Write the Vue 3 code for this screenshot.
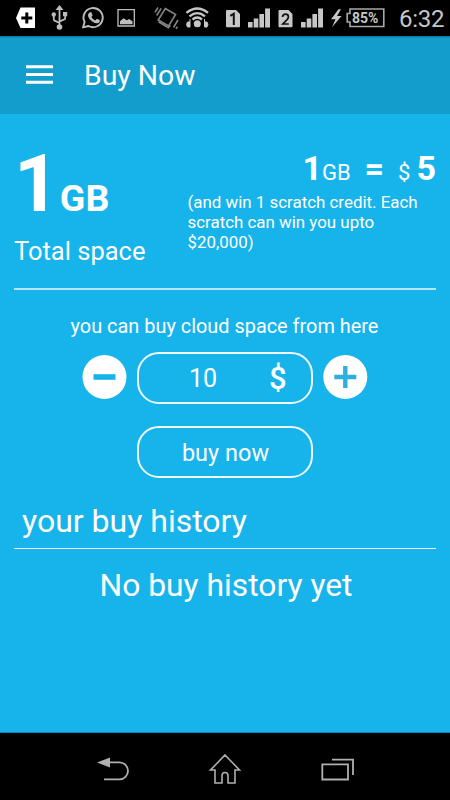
<script setup>
import { ref } from 'vue'

const amount = ref(10)
const decrease = () => { if (amount.value > 1) amount.value-- }
const increase = () => { amount.value++ }
</script>

<template>
  <div class="screen">
    <div class="status">
      <svg width="45" height="36" viewBox="0 0 45 36">
        <path d="M16 18 20.500 7.500H35V28H20.500Z" fill="#fff" />
        <path d="M26.800 12.500v11M21.300 18h11" stroke="#000" stroke-width="3" />
      </svg>
      <svg width="30" height="36" viewBox="45 0 30 36" fill="none" stroke="#bdbdbd" stroke-width="1.800">
        <path d="M59.500 9v18M53.800 15v4.200q0 1.300 1.400 1.700l4.300 2.100M65.200 14v4q0 1.300-1.400 1.700l-4.300 1.600" />
        <path d="M59.500 5 63.500 10H55.500Z" fill="#bdbdbd" stroke="none" />
        <circle cx="53.800" cy="14.500" r="2.200" fill="#bdbdbd" stroke="none" />
        <path d="M63 12h4.200v4.200h-4.200z" fill="#bdbdbd" stroke="none" />
        <circle cx="59.500" cy="27" r="2.800" fill="#bdbdbd" stroke="none" />
      </svg>
      <svg width="35" height="36" viewBox="75 0 35 36">
        <path d="M83 27.400 84.600 22A9.600 9.600 0 1 1 88.500 26Z" fill="none" stroke="#bdbdbd" stroke-width="1.900" stroke-linejoin="round" />
        <path d="M89.800 12.200h1.500l1.300 3-1.200 1.700q1.300 2.500 3.900 3.500l1.600-1.700 3 1.500q.1 2.500-2.600 3-2 .3-5.100-1.800-3.600-2.600-4.200-5.500-.2-2.400 1.800-3.700Z" fill="#bdbdbd" />
      </svg>
      <svg width="40" height="36" viewBox="110 0 40 36">
        <path d="M118 9.700h16.300v16.300H118Z" fill="none" stroke="#bdbdbd" stroke-width="1.300" />
        <path d="M120 24.200v-3l3.500-3 3.300 2 2.200-1.300 3.500 2.300v3Z" fill="#bdbdbd" />
      </svg>
      <svg width="34" height="36" viewBox="150 0 34 36" fill="none" stroke="#858585" stroke-width="1.600">
        <path d="M165.300 8.500 175.600 14.500 168.600 26 158.200 20Z" />
        <path d="M158.500 21.800l9.800 6 2-2.500M161.200 8.300l-4.500 7.200M158 7.500l-3 4.800M178 20l-4.500 7.500M177.500 26.800l-1.500 2" />
      </svg>
      <svg width="36" height="36" viewBox="184 0 36 36" fill="none" stroke="#c7c7c7" stroke-width="2.300">
        <path d="M186.500 12.800Q197.300 4.300 208 12.800M189.500 16.300Q197.300 10 205 16.300M192.500 19.500Q197.300 15.500 202 19.500" />
        <circle cx="197.300" cy="23.800" r="3.500" fill="#c7c7c7" stroke="none" />
        <path d="M190 19v8h-2.500l-1-2.500 1-2.500h2.500M204.500 19v8h2.500l1-2.500-1-2.500h-2.500" fill="#c7c7c7" stroke-width="1" />
      </svg>
      <svg width="53" height="36" viewBox="220 0 53 36" fill="#c7c7c7">
        <path d="M227 10h9l4 4v12.200q0 1-1 1h-12q-1 0-1-1V11q0-1 1-1Z" />
        <path d="M230.300 15.800 233.800 13.700V25" fill="none" stroke="#111" stroke-width="2" />
        <path d="M248 22h4.600v5.500H248ZM253.700 18.500h4.600v9h-4.600ZM259.400 14h4.600v13.500h-4.600ZM265.100 8.500h4.900v19h-4.900Z" />
      </svg>
      <svg width="55" height="36" viewBox="273 0 55 36" fill="#c7c7c7">
        <path d="M279.500 10h9l4 4v12.200q0 1-1 1h-12q-1 0-1-1V11q0-1 1-1Z" />
        <path d="M282.500 17q.3-2.800 3-2.800t2.900 2.500q0 1.600-1.500 3.200L282.800 24h6" fill="none" stroke="#111" stroke-width="1.700" />
        <path d="M301 22h4.600v5.500H301ZM306.700 18.500h4.600v9h-4.600ZM312.400 14h4.600v13.500h-4.600ZM318.100 8.500h4.900v19h-4.900Z" />
      </svg>
      <svg width="18" height="36" viewBox="328 0 18 36">
        <path d="M338.500 9.300 331 19.300h4.500L332 27.300 341.600 16h-4.600L341 9.300Z" fill="#c7c7c7" />
      </svg>
      <div class="battery">
        <svg width="40" height="20" viewBox="0 0 40 20" fill="none" stroke="#a8a8a8" stroke-width="1.600">
          <path d="M4 1H37.800V18.500H4V14H1.200V5.500H4Z" />
        </svg>
        <span>85%</span>
      </div>
      <span class="clock">6:32</span>
    </div>

    <header class="bar">
      <svg class="menu" width="27" height="20" viewBox="0 0 27 20" fill="#fff">
        <path d="M0 .3h27v3H0ZM0 8h27v3H0ZM0 15.700h27v3H0Z" />
      </svg>
      <h1>Buy Now</h1>
    </header>

    <main>
      <section class="summary">
        <div class="total">
          <div class="size"><b class="num">1</b><b class="unit">GB</b></div>
          <div class="label">Total space</div>
        </div>
        <div class="offer">
          <div class="rate">
            <b>1</b><span class="gb">GB</span><b class="eq">=</b><span class="cur">$</span><b>5</b>
          </div>
          <p>(and win 1 scratch credit. Each scratch can win you upto $20,000)</p>
        </div>
      </section>

      <section class="purchase">
        <p class="hint">you can buy cloud space from here</p>
        <div class="stepper">
          <button class="round" aria-label="Decrease" @click="decrease">
            <svg width="46" height="46" viewBox="0 0 46 46">
              <circle cx="22.500" cy="22" r="22" fill="#fff" />
              <path d="M11.500 22h22" stroke="#16b4eb" stroke-width="5.600" />
            </svg>
          </button>
          <div class="field"><span class="amount">{{ amount }}</span><span class="dollar">$</span></div>
          <button class="round" aria-label="Increase" @click="increase">
            <svg width="46" height="46" viewBox="0 0 46 46">
              <circle cx="23.300" cy="22" r="22" fill="#fff" />
              <path d="M12.300 22h22M23.300 11v22" stroke="#2fafdd" stroke-width="4.400" />
            </svg>
          </button>
        </div>
        <button class="buy">buy now</button>
      </section>

      <section class="history">
        <h2>your buy history</h2>
        <p>No buy history yet</p>
      </section>
    </main>

    <nav>
      <svg width="34" height="32" viewBox="96 753 34 32" fill="none" stroke="#b0b0b0" stroke-width="1.800">
        <path d="M109 762.300H119.500A8.500 8.500 0 0 1 119.500 779.300H104" />
        <path d="M97 762.500 110 757.500V767.500Z" fill="#b0b0b0" stroke="none" />
      </svg>
      <svg width="34" height="32" viewBox="208 750 34 32" fill="none" stroke="#b0b0b0" stroke-width="1.600">
        <path d="M225 752 239.500 767H235V780H228V772.500a3 3 0 0 0-6 0V780H215V767H210.500Z" />
      </svg>
      <svg width="34" height="32" viewBox="320 753 34 32" fill="none" stroke="#b0b0b0" stroke-width="1.800">
        <path d="M322.300 764.300H348V779.500H322.300ZM332 759.600H353V775" />
      </svg>
    </nav>
  </div>
</template>

<style>
body { margin: 0; background: #000; }
</style>

<style scoped>
.screen {
  width: 450px;
  height: 800px;
  display: flex;
  flex-direction: column;
  overflow: hidden;
  background: #16b4eb;
  color: #fff;
  font-family: Roboto, sans-serif;
}
h1, h2, p { margin: 0; font-weight: 400; }
button { font: inherit; color: inherit; background: none; border: 0; padding: 0; }
svg { display: block; flex: none; }
.status {
  height: 36px;
  flex: none;
  display: flex;
  align-items: center;
  background: #000;
  color: #c7c7c7;
}
.battery { width: 40px; height: 20px; display: grid; }
.battery > * { grid-area: 1 / 1; }
.battery span {
  padding-left: 6px;
  font-size: 14px;
  line-height: 21px;
  font-weight: 700;
}
.clock { margin-left: 13px; font-size: 24px; line-height: 34px; padding-top: 1px; letter-spacing: -.3px; }
.bar {
  height: 78px;
  flex: none;
  display: flex;
  align-items: center;
  padding-left: 26px;
  background: linear-gradient(#0e6f92, #129dcd 2px);
}
.bar h1 { margin-left: 31px; font-size: 28.400px; line-height: 76px; padding-top: 2px; }
main { flex: 1; padding: 0 14px; border-bottom: 1px solid #0d86b0; }
.summary {
  height: 174px;
  display: flex;
  border-bottom: 2px solid #b5e6f9;
}
.total { width: 173.500px; flex: none; }
.size { height: 120px; line-height: 140px; display: flex; align-items: baseline; }
.num { font-size: 79px; }
.unit { font-size: 37.500px; margin-left: .5px; }
.label { font-size: 25.500px; line-height: 34px; }
.offer { flex: 1; padding-top: 34px; }
.rate {
  height: 44px;
  line-height: 40px;
  display: flex;
  align-items: baseline;
  justify-content: flex-end;
  font-size: 34px;
}
.gb { font-size: 22px; }
.eq { margin: 0 14px 0 14px; }
.cur { font-size: 22px; margin-right: 6px; }
.offer p { font-size: 16.900px; line-height: 20px; width: 240px; }
.purchase { display: flex; flex-direction: column; align-items: center; padding-top: 20px; }
.hint { font-size: 19.900px; line-height: 30px; padding: 2px 1px 0 0; }
.stepper { display: flex; align-items: center; gap: 9px; margin-top: 10px; }
.round { width: 46px; height: 46px; }
.field, .buy {
  box-sizing: border-box;
  width: 176px;
  height: 52px;
  border: 2px solid #eefaff;
  border-radius: 22px;
}
.field { display: flex; align-items: center; line-height: 50px; }
.amount { width: 79px; padding: 2px 0 0 50px; box-sizing: border-box; font-size: 25px; }
.dollar { margin-left: 51px; font-size: 31px; font-weight: 500; padding-top: 2px; }
.buy { margin-top: 22px; font-size: 23.500px; line-height: 48px; padding: 1px 0 0 1px; }
.history h2 {
  margin-top: 16px;
  padding-left: 8px;
  height: 54px;
  line-height: 54px;
  font-size: 32px;
  border-bottom: 1px solid #eefaff;
}
.history p { text-align: center; font-size: 31.800px; line-height: 72px; padding-left: 2px; }
nav {
  height: 67px;
  flex: none;
  display: flex;
  align-items: center;
  justify-content: space-between;
  padding: 4px 96px 0;
  box-sizing: border-box;
  background: #000;
}
</style>
